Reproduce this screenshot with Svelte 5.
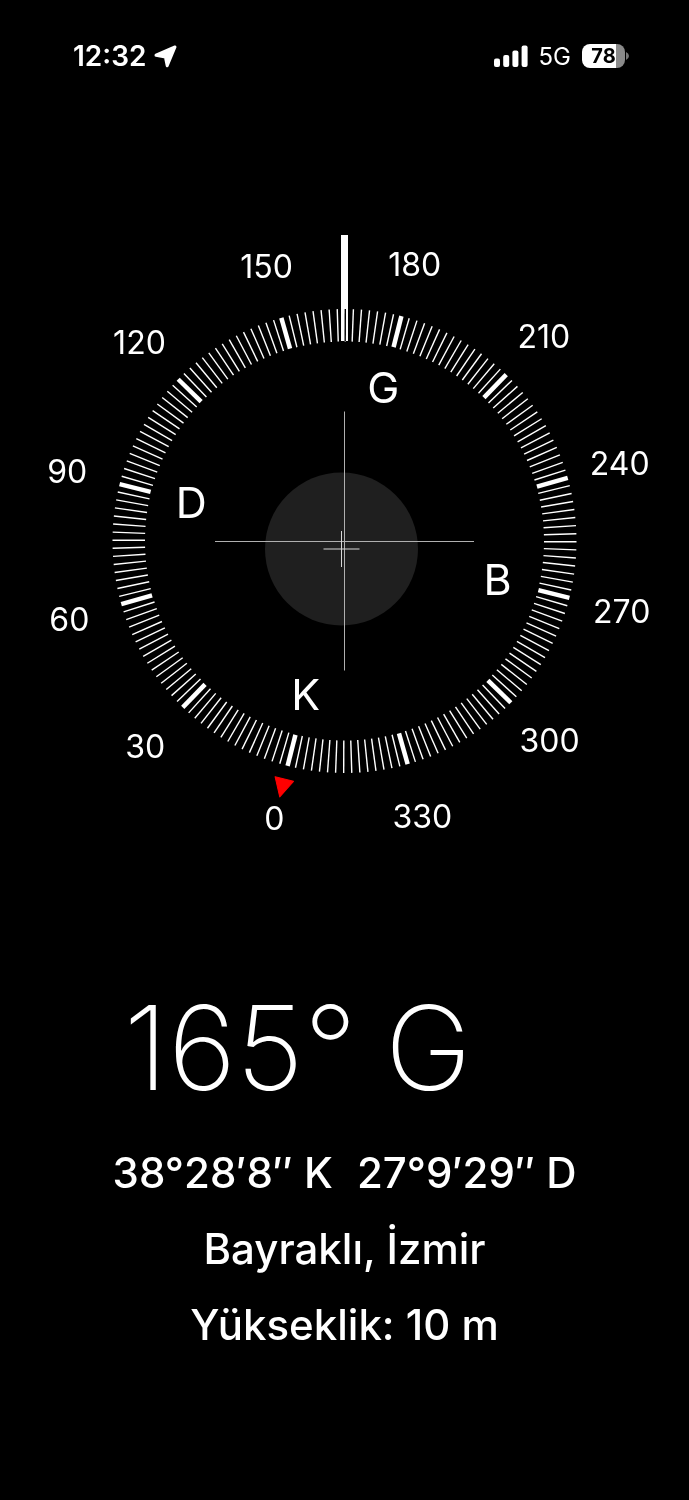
<script>
  const heading = 165.8;

  const ticks = Array.from({ length: 180 }, (_, i) => i * 2);
  const labels = Array.from({ length: 12 }, (_, i) => i * 30);
  const cardinals = [
    { name: 'K', deg: 0 },
    { name: 'D', deg: 90 },
    { name: 'G', deg: 180 },
    { name: 'B', deg: 270 }
  ];

  // upright text placed on a ring around the dial centre
  function place(deg, radius) {
    const a = ((deg - heading) * Math.PI) / 180;
    return { x: Math.sin(a) * radius, y: -Math.cos(a) * radius };
  }
</script>

<main class="screen">
  <header class="status">
    <div class="clock">
      <time>12:32</time>
      <svg class="arrow" viewBox="0 0 23 23" aria-hidden="true">
        <path d="M21 2 13.2 20.8 11.4 12 2 10.2Z" />
      </svg>
    </div>
    <div class="signals">
      <svg class="bars" viewBox="0 0 34 22" aria-hidden="true">
        <rect x="0" y="13.5" width="6" height="8.5" rx="2" />
        <rect x="9.2" y="10" width="6" height="12" rx="2" />
        <rect x="18.4" y="5.5" width="6" height="16.5" rx="2" />
        <rect x="27.6" y="0.5" width="6" height="21.5" rx="2" />
      </svg>
      <span class="network">5G</span>
      <div class="battery">
        <span class="level">78</span>
        <svg class="nub" viewBox="0 0 3 8" aria-hidden="true"><path d="M0 0Q3 1.5 3 4T0 8Z" /></svg>
      </div>
    </div>
  </header>

  <svg class="dial" viewBox="-344.5 -321 689 642" role="img" aria-label="Pusula">
    <circle class="level-disc" cx="-3" cy="8" r="76.5" />
    <path class="hair" d="M-129.5 0.5H129.5M0 -129.5V129.5" />
    <path class="hair small" d="M-21 8H15M-3 -10V26" />

    <g transform="rotate({-heading})">
      {#each ticks as deg}
        <line
          class="tick"
          class:major={deg % 30 === 0}
          y1={deg % 30 === 0 ? -200 : -199.5}
          y2="-232"
          transform="rotate({deg})"
        />
      {/each}
      <path class="north" d="M-9.5 -245.5H9.5L0 -264Z" />
    </g>

    <rect class="pin" x="-3.5" y="-306" width="7" height="106" />

    {#each labels as deg}
      {@const p = place(deg, 286)}
      <text class="degree" x={p.x} y={p.y + 12}>{deg}</text>
    {/each}
    {#each cardinals as c}
      {@const p = place(c.deg, 158)}
      <text class="cardinal" x={p.x} y={p.y + 15.5}>{c.name}</text>
    {/each}
  </svg>

  <section class="readout">
    <h1><span>165°</span> <span>G</span></h1>
    <p class="coords"><span>38°28′8″ K</span><span>27°9′29″ D</span></p>
    <p>Bayraklı, İzmir</p>
    <p>Yükseklik: 10 m</p>
  </section>
</main>

<style>
  :global(body) {
    background: #000;
  }

  .screen {
    min-height: 100vh;
    background: #000;
    color: #fff;
    font-family: Inter, "Liberation Sans", sans-serif;
  }

  .status {
    display: flex;
    justify-content: space-between;
    align-items: center;
    height: 32px;
    padding: 40px 60px 0 73px;
  }

  .clock,
  .signals {
    display: flex;
    align-items: center;
  }

  .clock {
    gap: 8px;
    font-size: 28px;
    font-weight: 600;
  }

  .arrow {
    width: 23px;
    height: 23px;
    fill: #fff;
    stroke: #fff;
    stroke-width: 3;
    stroke-linejoin: round;
  }

  .signals {
    gap: 11px;
  }

  .bars {
    width: 34px;
    height: 22px;
    fill: #fff;
  }

  .network {
    font-size: 24px;
  }

  .battery {
    display: flex;
    align-items: center;
    gap: 1px;
  }

  .level {
    width: 43px;
    height: 24px;
    border-radius: 8px;
    background: linear-gradient(to right, #fff 78%, #8a8a8a 78%);
    color: #000;
    font-size: 20px;
    font-weight: 700;
    line-height: 24px;
    text-align: center;
  }

  .nub {
    width: 3px;
    height: 8px;
    fill: #777;
  }

  .dial {
    display: block;
    width: 100%;
    margin-top: 148px;
  }

  .level-disc {
    fill: #1f1f1f;
  }

  .hair {
    stroke: #b0b0b0;
    stroke-width: 1;
  }

  .small {
    stroke: #d8d8d8;
  }

  .tick {
    stroke: #fff;
    stroke-width: 1.4;
  }

  .major {
    stroke-width: 4.5;
  }

  .north {
    fill: #f00;
    stroke: #f00;
    stroke-linejoin: round;
  }

  .pin {
    fill: #fff;
    mix-blend-mode: difference;
  }

  text {
    fill: #fff;
    text-anchor: middle;
  }

  .degree {
    font-size: 32px;
  }

  .cardinal {
    font-size: 43px;
  }

  .readout {
    padding: 112px 24px 0;
    text-align: center;
  }

  h1 {
    display: flex;
    justify-content: center;
    gap: 28px;
    margin: 0 94px 23px 0;
    font-size: 117px;
    font-weight: 250;
    line-height: 148px;
  }

  p {
    margin: 0 0 20px;
    font-size: 42px;
    font-weight: 500;
    line-height: 56px;
  }

  .coords {
    display: flex;
    justify-content: center;
    gap: 24px;
  }
</style>
